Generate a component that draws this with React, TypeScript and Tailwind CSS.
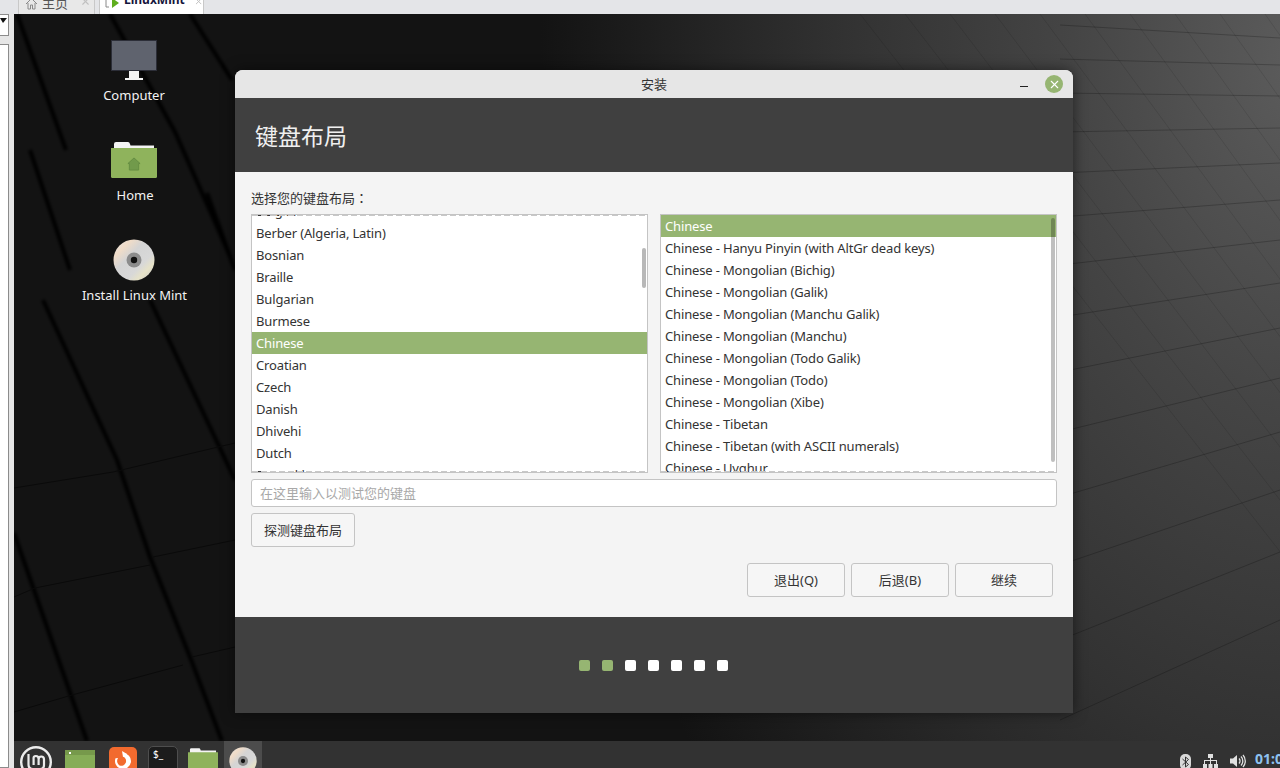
import React from 'react';
import { X } from 'lucide-react';

const leftItems = ['Berber (Algeria, Latin)', 'Bosnian', 'Braille', 'Bulgarian', 'Burmese', 'Chinese', 'Croatian', 'Czech', 'Danish', 'Dhivehi', 'Dutch'];
const rightItems = [
  'Chinese',
  'Chinese - Hanyu Pinyin (with AltGr dead keys)',
  'Chinese - Mongolian (Bichig)',
  'Chinese - Mongolian (Galik)',
  'Chinese - Mongolian (Manchu Galik)',
  'Chinese - Mongolian (Manchu)',
  'Chinese - Mongolian (Todo Galik)',
  'Chinese - Mongolian (Todo)',
  'Chinese - Mongolian (Xibe)',
  'Chinese - Tibetan',
  'Chinese - Tibetan (with ASCII numerals)',
  'Chinese - Uyghur',
];

// wallpaper lines, taken off the reference
const darkBands = [
  'M17 14L66 150',
  'M110 14L175 132L230 256',
  'M190 14L232 80',
  'M43 300L117 460L150 557L190 657L222 741',
  'M150 300L235 480',
  'M14 533L87 741',
  'M30 150L70 270',
  'M207 193L235 270',
];
const faintLeft = [
  'M14 488L113 472L235 443',
  'M35 588L150 565',
  'M153 557L235 540',
  'M72 695L183 665',
  'M192 657L235 647',
  'M14 712L72 695',
  'M14 597L35 588',
];
const gridRows = [
  [25, 38], [59, 65], [93, 96], [132, 128], [173, 163], [217, 200], [265, 240], [317, 283],
  [372, 328], [432, 378], [497, 432], [565, 490], [640, 552], [720, 620],
];
const gridFan = [860, 905, 950, 995, 1040, 1085, 1130, 1175, 1220, 1265, 1310, 1355];

const font = "font-['Noto_Sans','Noto_Sans_CJK_SC',sans-serif]";
const dashed = 'absolute inset-x-0 h-px bg-[repeating-linear-gradient(90deg,#c8c8c8_0_6px,transparent_6px_9px)]';

function Row({ label, selected }: { label: string; selected?: boolean }) {
  return (
    <div className={`h-[22px] shrink-0 pl-[4px] text-[13px] leading-[22px] tracking-[-0.15px] whitespace-nowrap ${selected ? 'bg-[#96b572] text-white' : 'text-[#333333]'}`}>
      {label}
    </div>
  );
}

function Cd({ size }: { size: number }) {
  return (
    <svg width={size} height={size} viewBox="0 0 42 42">
      <defs>
        <linearGradient id="cdShine" x1="0" y1="0" x2="1" y2="1">
          <stop offset="0" stopColor="#e8e8e8" />
          <stop offset="0.22" stopColor="#f0dcc8" />
          <stop offset="0.4" stopColor="#d4d4d4" />
          <stop offset="0.65" stopColor="#d8d8d8" />
          <stop offset="0.78" stopColor="#e6e2c8" />
          <stop offset="1" stopColor="#c8c8c8" />
        </linearGradient>
      </defs>
      <circle cx="21" cy="21" r="20.5" fill="url(#cdShine)" />
      <circle cx="21" cy="21" r="7.500" fill="#8c8c8c" />
      <circle cx="21" cy="21" r="3.200" fill="#111111" />
    </svg>
  );
}

function Folder({ w, h }: { w: number; h: number }) {
  return (
    <svg width={w} height={h} viewBox="0 0 46 36">
      <path d="M3 6V2Q3 0 5 0H17q1.500 0 2 2l.5 1.500H43V8H3z" fill="#f4f4f4" />
      <path d="M0 6h46v28.500q0 1.500-1.500 1.500h-43Q0 36 0 34.500z" fill="#8fb35c" />
    </svg>
  );
}

function DesktopIcon({ label, className, labelClass, children }: { label: string; className: string; labelClass: string; children: React.ReactNode }) {
  return (
    <div className={`absolute flex flex-col items-center ${className}`}>
      {children}
      <div className={`text-[13px] leading-[18px] text-[#f2f2f2] whitespace-nowrap ${labelClass}`}>{label}</div>
    </div>
  );
}

function WizardButton({ label }: { label: string }) {
  return (
    <button className="h-[34px] w-[98px] rounded-[3px] border border-[#c4c4c4] bg-[#f6f6f6] pt-[2px] text-[13px] text-[#333333]">
      {label}
    </button>
  );
}

function Wallpaper() {
  return (
    <svg className="absolute inset-0" width="1280" height="768" viewBox="0 0 1280 768">
      <defs>
        <radialGradient id="glow" cx="0" cy="0" r="1" gradientUnits="userSpaceOnUse" gradientTransform="translate(1300 60) scale(760 1150)">
          <stop offset="0" stopColor="#5c5c5c" />
          <stop offset="0.3" stopColor="#454545" />
          <stop offset="0.6" stopColor="#323232" />
          <stop offset="1" stopColor="#131313" />
        </radialGradient>
        <filter id="soft" x="-10%" y="-10%" width="120%" height="120%">
          <feGaussianBlur stdDeviation="1.800" />
        </filter>
      </defs>
      <rect width="1280" height="768" fill="url(#glow)" />
      <g fill="none" stroke="#060606" strokeWidth="4" filter="url(#soft)">
        {darkBands.map((d) => (
          <path key={d} d={d} />
        ))}
      </g>
      <g fill="none" stroke="#0a0a0a" strokeWidth="1">
        {faintLeft.map((d) => (
          <path key={d} d={d} />
        ))}
      </g>
      <g fill="none" stroke="#000000" strokeOpacity="0.22">
        {gridRows.map(([a, b]) => (
          <path key={a} d={`M1060 ${a}L1280 ${b}`} />
        ))}
      </g>
      <g fill="none" stroke="#000000" strokeOpacity="0.1">
        {gridFan.map((x, i) => (
          <path key={x} d={`M${x} 14L${x + 500} ${14 + 640 + i * 8}`} />
        ))}
      </g>
    </svg>
  );
}

export default function App() {
  return (
    <div className={`relative h-[768px] w-[1280px] overflow-hidden bg-[#131313] ${font}`}>
      <Wallpaper />

      {/* vm host chrome */}
      <div className="absolute left-0 top-0 flex h-[14px] w-[1280px] overflow-hidden bg-[#e4e5e8] pl-[18px]">
        <div className="flex h-[14px] w-[77px] items-start border-x border-[#c8c8c8] bg-[#e8e8e8] pl-[6px] text-[13px] text-[#555555]">
          <svg className="-mt-[3px] shrink-0" width="13" height="13" viewBox="0 0 13 13">
            <path d="M1 7l5.500-5.500L12 7M3 6v6h2.500V8h2v4H10V6" fill="none" stroke="#8a8a8a" />
          </svg>
          <span className="-mt-[4px] ml-[4px] leading-[14px]">主页</span>
          <X size={11} strokeWidth={2.5} className="-mt-[4px] ml-[12px] text-[#c0c0c0]" />
        </div>
        <div className="ml-[4px] flex h-[14px] w-[105px] items-start border-x border-[#c8c8c8] bg-white pl-[5px] text-[12px] font-bold text-[#14143c]">
          <svg className="-mt-[3px] shrink-0" width="15" height="11" viewBox="0 0 15 11">
            <path d="M3 1H1v9h3" fill="none" stroke="#8a8a8a" />
            <path d="M7 1l7 5-7 5z" fill="#5fae1e" />
          </svg>
          <span className="-mt-[7px] ml-[4px] leading-[14px]">LinuxMint</span>
          <X size={11} strokeWidth={2.5} className="-mt-[4px] ml-[9px] text-[#c0c0c0]" />
        </div>
      </div>
      <div className="absolute left-0 top-[14px] h-[754px] w-[14px] bg-[#e6e6e6]">
        <div className="h-[22px] w-[9px] border-y border-r border-[#8c8c8c] bg-white">
          <svg width="8" height="20" viewBox="0 0 8 20"><path d="M0 3h7l-4 5z" fill="#111111" /></svg>
        </div>
        <div className="mt-[8px] h-[724px] w-[9px] border-y border-r border-[#8c8c8c] bg-white" />
      </div>

      <DesktopIcon label="Computer" className="left-[94px] top-[40px] w-[80px]" labelClass="mt-[6px]">
        <svg width="46" height="40" viewBox="0 0 46 40">
          <rect x="0.500" y="0.500" width="45" height="30" fill="#5f636e" stroke="#2c2e38" />
          <path d="M18 31h10v7H18z" fill="#f4f4f4" />
          <path d="M14 38h18v2H14z" fill="#f4f4f4" />
        </svg>
      </DesktopIcon>
      <DesktopIcon label="Home" className="left-[94px] top-[142px] w-[80px]" labelClass="mt-[8px] ml-[2px]">
        <div className="relative">
          <Folder w={46} h={36} />
          <svg className="absolute left-[16px] top-[15px]" width="14" height="14" viewBox="0 0 15 15">
            <path d="M7.500 1L14 7h-1.500v7h-10V7H1z" fill="#719a4b" stroke="#648c42" />
          </svg>
        </div>
      </DesktopIcon>
      <DesktopIcon label="Install Linux Mint" className="left-[74px] top-[239px] w-[120px]" labelClass="mt-[5px] ml-[1px]">
        <Cd size={42} />
      </DesktopIcon>

      {/* installer window */}
      <div className="absolute left-[235px] top-[70px] flex h-[643px] w-[838px] flex-col overflow-hidden rounded-t-[8px] bg-[#f4f4f4] shadow-[0_0_14px_rgba(0,0,0,0.5)]">
        <div className="relative flex h-[28px] shrink-0 items-center justify-center bg-[#e6e6e6] pt-[2px] text-[13px] text-[#333333]">
          安装
          <div className="absolute right-[45px] top-[16px] h-px w-[8px] bg-[#222222]" />
          <div className="absolute right-[10px] top-[5px] flex h-[18px] w-[18px] items-center justify-center rounded-full bg-[#96b572]">
            <X size={13} strokeWidth={2} className="text-white" />
          </div>
        </div>
        <div className="flex h-[74px] shrink-0 items-center bg-[#404040] pl-[20px] pt-[2px] text-[23px] text-[#f0f0f0]">键盘布局</div>

        <div className="flex flex-1 flex-col px-[16px]">
          <div className="mt-[17px] h-[18px] text-[13px] leading-[18px] text-[#333333]">
            选择您的键盘布局<span className="font-['Noto_Sans_CJK_JP',sans-serif]">：</span>
          </div>
          <div className="mt-[7px] flex gap-[12px]">
            <div className="relative h-[259px] w-[397px] overflow-hidden border border-[#c4c4c4] bg-white">
              <div className="-mt-[15px] flex flex-col">
                <Row label="Belgian" />
                {leftItems.map((item) => (
                  <Row key={item} label={item} selected={item === 'Chinese'} />
                ))}
                <Row label="Dzongkha" />
              </div>
              <div className={`${dashed} top-0`} />
              <div className={`${dashed} bottom-0`} />
              <div className="absolute right-[1px] top-[33px] h-[40px] w-[4px] rounded-full bg-[#b8b8b8]" />
            </div>
            <div className="relative h-[259px] w-[397px] overflow-hidden border border-[#c4c4c4] bg-white">
              <div className="flex flex-col">
                {rightItems.map((item, i) => (
                  <Row key={item} label={item} selected={i === 0} />
                ))}
              </div>
              <div className={`${dashed} bottom-0`} />
              <div className="absolute right-[1px] top-[3px] h-[244px] w-[4px] rounded-full bg-[#000000]/25" />
            </div>
          </div>
          <div className="mt-[6px] flex h-[28px] w-[806px] items-center rounded-[3px] border border-[#c4c4c4] bg-white pl-[8px] pt-[1px] text-[13px] text-[#a8a8a8]">
            在这里输入以测试您的键盘
          </div>
          <button className="mt-[6px] h-[34px] w-[104px] rounded-[3px] border border-[#c4c4c4] bg-[#f6f6f6] pt-[2px] text-[13px] text-[#333333]">
            探测键盘布局
          </button>
          <div className="mt-[16px] flex justify-end gap-[6px] pr-[4px]">
            <WizardButton label="退出(Q)" />
            <WizardButton label="后退(B)" />
            <WizardButton label="继续" />
          </div>
        </div>

        <div className="flex h-[96px] shrink-0 items-center justify-center gap-[12px] bg-[#404040] pr-[2px] pt-[1px]">
          {[0, 1, 2, 3, 4, 5, 6].map((i) => (
            <div key={i} className={`h-[11px] w-[11px] rounded-[2px] ${i < 2 ? 'bg-[#96b572]' : 'bg-white'}`} />
          ))}
        </div>
      </div>

      {/* panel */}
      <div className="absolute left-[14px] top-[741px] flex h-[27px] w-[1266px] items-start overflow-hidden bg-[#323232]">
        <svg className="ml-[6px] mt-[5px] shrink-0" width="32" height="32" viewBox="0 0 32 32">
          <circle cx="16" cy="16" r="14.800" fill="none" stroke="#ececec" strokeWidth="2.400" />
          <path d="M8.500 8v10.500q0 4.500 4.500 4.500h7q4 0 4-4v-5.500q0-3-2.700-3t-2.700 3V19m0-6q0-3-2.700-3T13.600 13v6" fill="none" stroke="#ececec" strokeWidth="2.200" />
        </svg>
        <div className="ml-[13px] mt-[9px] h-[30px] w-[30px] shrink-0 bg-[#86ad57]">
          <div className="flex h-[5px] items-center bg-[#76994b] pl-[4px]">
            <div className="h-[2px] w-[2px] bg-white" />
          </div>
        </div>
        <div className="ml-[14px] mt-[6px] flex h-[30px] w-[28px] shrink-0 justify-center rounded-[5px] bg-[#f26a2e] pt-[4px]">
          <svg width="22" height="20" viewBox="0 0 22 20">
            <path d="M11 2a8 8 0 1 1-7.500 5.200L6 7a5.500 5.500 0 0 0 1.500 7.500A4.500 4.500 0 1 0 11 5.500z" fill="#ffffff" />
            <path d="M10 0l5 3-4 3z" fill="#ffffff" />
          </svg>
        </div>
        <div className="ml-[11px] mt-[5px] h-[30px] w-[30px] shrink-0 rounded-[5px] border border-[#4e4e4e] bg-[#1c1c1c] pl-[4px] pt-[1px] text-[10px] leading-[13px] text-white">$_</div>
        <div className="ml-[10px] mt-[7px] shrink-0">
          <Folder w={30} h={24} />
        </div>
        <div className="ml-[6px] flex h-[27px] w-[38px] shrink-0 justify-center bg-[#4c4c4c] pt-[6px]">
          <div className="h-[28px] shrink-0">
            <Cd size={28} />
          </div>
        </div>
        <div className="ml-auto flex h-[27px] w-[100px] shrink-0 items-start pt-[13px]">
          <svg className="shrink-0" width="11" height="16" viewBox="0 0 11 16">
            <rect width="11" height="16" rx="5" fill="#d8d8d8" />
            <path d="M2.500 5l6 5.500-3 2.500V3l3 2.500-6 5.500" fill="none" stroke="#323232" />
          </svg>
          <svg className="ml-[12px] shrink-0" width="15" height="14" viewBox="0 0 15 14">
            <path d="M5 0h5v4H8v2h6v4h1v4h-4v-4h2V7H8v3h1.500v4h-4v-4H7V7H2v3h2v4H0v-4h1V6h6V4H5z" fill="#e0e0e0" />
          </svg>
          <svg className="ml-[12px] shrink-0" width="16" height="14" viewBox="0 0 16 14">
            <path d="M0 4.500h3L7 1v12L3 9.500H0z" fill="#e0e0e0" />
            <path d="M9 4.500a3.500 3.500 0 0 1 0 5M11 2.500a6.500 6.500 0 0 1 0 9M13 1a9 9 0 0 1 0 12" fill="none" stroke="#e0e0e0" strokeWidth="1.300" />
          </svg>
          <span className="ml-[9px] -mt-[3px] text-[14px] font-bold leading-[16px] whitespace-nowrap text-[#8ec2f0]">01:00</span>
        </div>
      </div>
    </div>
  );
}
